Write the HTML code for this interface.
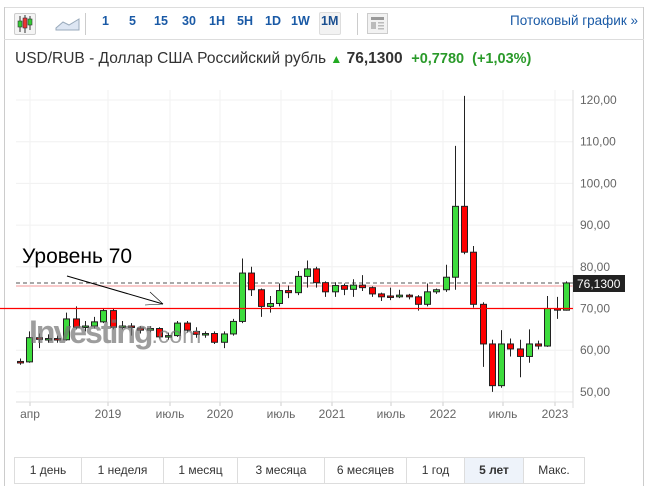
<!DOCTYPE html>
<html><head><meta charset="utf-8"><style>
body{margin:0;width:648px;height:486px;background:#fff;overflow:hidden;font-family:"Liberation Sans",Arial,sans-serif;position:relative}
.a{position:absolute}
.tb{font-size:12.5px;font-weight:bold;color:#1a5aa6;top:14px}
</style></head><body>
<div class="a" style="left:4px;top:7px;width:640px;height:1px;background:#ddd"></div>
<div class="a" style="left:4px;top:7px;width:1px;height:479px;background:#ccc"></div>
<div class="a" style="left:643px;top:7px;width:1px;height:479px;background:#ccc"></div>
<div class="a" style="left:4px;top:39px;width:640px;height:1px;background:#ddd"></div>
<div class="a" style="left:14px;top:13px;width:20px;height:20px;border:1px solid #ccc;border-radius:2px;background:#f4f4f4"></div>
<svg class="a" style="left:14px;top:13px" width="22" height="22"><g stroke="#333" stroke-width="1"><line x1="6" y1="3" x2="6" y2="19"/><line x1="11" y1="2" x2="11" y2="20"/><line x1="16" y1="3" x2="16" y2="17"/></g><rect x="4" y="8" width="4" height="6" fill="#3c3" stroke="#333" stroke-width=".6"/><rect x="9" y="5" width="4" height="10" fill="#e33" stroke="#333" stroke-width=".6"/><rect x="14" y="6" width="4" height="6" fill="#3c3" stroke="#333" stroke-width=".6"/></svg>
<svg class="a" style="left:55px;top:16px" width="26" height="16"><path d="M1 12 L8 6 L14 9 L24 3 L24 14 L1 14Z" fill="#dde6f3" stroke="#9ab" stroke-width="1"/></svg>
<div class="a" style="left:85px;top:13px;width:1px;height:22px;background:#ccc"></div>
<div class="a tb" style="left:102px">1</div>
<div class="a tb" style="left:129px">5</div>
<div class="a tb" style="left:154px">15</div>
<div class="a tb" style="left:182px">30</div>
<div class="a tb" style="left:209px">1H</div>
<div class="a tb" style="left:237px">5H</div>
<div class="a tb" style="left:265px">1D</div>
<div class="a tb" style="left:291px">1W</div>
<div class="a" style="left:319px;top:12px;width:20px;height:21px;border:1px solid #ddd;border-radius:2px;background:#f2f2f2"></div>
<div class="a tb" style="left:321px;color:#1a4f90">1M</div>
<div class="a" style="left:357px;top:13px;width:1px;height:22px;background:#ccc"></div>
<svg class="a" style="left:367px;top:13px" width="22" height="22"><rect x=".5" y=".5" width="20" height="20" fill="#f2f2f2" stroke="#ccc"/><rect x="4" y="4" width="13" height="3" fill="#999"/><g fill="#bbb"><rect x="4" y="9" width="5" height="7"/><rect x="11" y="9" width="6" height="1.5"/><rect x="11" y="12" width="6" height="1.5"/><rect x="11" y="15" width="6" height="1.5"/></g></svg>
<div class="a" style="right:10px;top:13px;font-size:13.5px;color:#1a5aa6">Потоковый график »</div>
<div class="a" style="left:15px;top:50px;font-size:15.5px;color:#333;white-space:nowrap">USD/RUB - Доллар США Российский рубль <span style="color:#2a2;font-size:12px">&#9650;</span> <b>76,1300</b> &nbsp;<b style="color:#2a9a2a;font-size:14.5px">+0,7780 &nbsp;(+1,03%)</b></div>
<svg id="ch" class="a" style="left:0;top:0" width="648" height="440"></svg>
<div class="a" style="left:22px;top:245px;font-size:21px;color:#000">Уровень 70</div>
<div class="a" style="left:29px;top:314px;font-size:32px;font-weight:bold;color:rgba(115,115,115,.7);letter-spacing:-2px">Investing<span style="font-weight:normal;font-size:23px;letter-spacing:0">.com</span></div>
<div class="a" style="left:14px;top:457px;height:25px;display:flex;border:1px solid #ddd;font-size:12px;color:#333">
<div style="width:66px;text-align:center;line-height:25px;border-right:1px solid #ddd">1 день</div>
<div style="width:81px;text-align:center;line-height:25px;border-right:1px solid #ddd">1 неделя</div>
<div style="width:73px;text-align:center;line-height:25px;border-right:1px solid #ddd">1 месяц</div>
<div style="width:86px;text-align:center;line-height:25px;border-right:1px solid #ddd">3 месяца</div>
<div style="width:81px;text-align:center;line-height:25px;border-right:1px solid #ddd">6 месяцев</div>
<div style="width:57px;text-align:center;line-height:25px;border-right:1px solid #ddd">1 год</div>
<div style="width:58px;text-align:center;line-height:25px;border-right:1px solid #ddd;background:#eef3fa;font-weight:bold">5 лет</div>
<div style="width:60px;text-align:center;line-height:25px">Макс.</div>
</div>
<script>
var d=[[57.3,57.2,58,56.5],[57.2,63,64.5,57],[63,62.6,64,60.5],[62.6,62.8,63.8,61.8],[62.8,62.5,63.5,61.8],[62.5,67.5,69,62.3],[67.5,65.5,70.5,65],[65.5,65.8,67,64.5],[65.8,66.8,68,65.2],[66.8,69.5,70,66.5],
[69.5,65.5,70,65],[65.5,65.8,67,65],[65.8,65.5,66.5,63.5],[65.3,64.8,65.8,64],[64.8,65.2,65.8,64.3],[65.2,63.2,65.5,62.8],[63.2,63.5,64.2,62.5],[63.5,66.5,67,63.2],[66.5,64.8,67,64.2],[64.5,63.8,65.5,63],[63.8,64,64.5,63],[64,61.9,64.5,61.5],
[61.9,63.9,64.5,60.5],[63.9,66.9,67.5,63.5],[66.9,78.5,82,66.5],[78.5,74.5,80,73],[74.5,70.5,74.8,68],[70.5,71.2,73,69],[71.2,74.3,76,70.5],[74.3,73.8,75.5,72.5],[73.8,77.7,79,73.2],[77.7,79.5,81.5,75],[79.5,76.2,80,75],[76.2,74,76.5,72.8],
[74,75.5,76.3,72.8],[75.5,74.6,76,73.2],[74.6,75.6,77,72.8],[75.6,75,78,74.2],[75,73.5,75.3,72.8],[73.5,72.8,73.8,71.8],[73,72.8,75,72],[72.8,73.2,74.5,72.5],[73.2,72.8,73.5,72.2],[72.8,71,73.2,69.5],[71,74,76,70.5],[74,74.5,74.8,73.5],
[74.5,77.5,80.5,74],[77.5,94.5,109,74.5],[94.5,83.5,121,83],[83.5,71,85,70.2],[71,61.5,71.5,56],[61.5,51.5,62.5,50],[51.5,61.5,64.8,51],[61.5,60.3,62.8,58.5],[60.3,58.5,62.5,53.5],[58.5,61.5,65,57],[61.5,61,62.3,60.2],[61,70,73,60.8],[70,69.6,72.8,67.5],[69.6,76.13,76.5,69.5]];
function y(p){return 100+(120-p)*4.17}
var s='',i;
for(var p=50;p<=120;p+=10){s+='<line x1="16" x2="573" y1="'+y(p)+'" y2="'+y(p)+'" stroke="#f0f0f0"/>';s+='<text x="580" y="'+(y(p)+4)+'" font-size="12" fill="#666" font-family="Liberation Sans">'+p+',00</text>';}
var lx=[[30,'апр'],[108,'2019'],[170,'июль'],[220,'2020'],[281,'июль'],[332,'2021'],[391,'июль'],[443,'2022'],[503,'июль'],[555,'2023']];
lx.forEach(function(l){s+='<line x1="'+l[0]+'" x2="'+l[0]+'" y1="90" y2="402" stroke="#f2f2f2"/><line x1="'+l[0]+'" x2="'+l[0]+'" y1="402" y2="406" stroke="#ccc"/><text x="'+l[0]+'" y="418" text-anchor="middle" font-size="12" fill="#666" font-family="Liberation Sans">'+l[1]+'</text>';});
s+='<line x1="16" x2="573" y1="402" y2="402" stroke="#ddd"/><line x1="573" x2="573" y1="90" y2="408" stroke="#ddd"/>';
s+='<line x1="16" x2="573" y1="286" y2="286" stroke="#f8caca" stroke-width="2"/>';
s+='<line x1="16" x2="573" y1="283" y2="283" stroke="#555" stroke-dasharray="4,3"/>';
for(i=0;i<d.length;i++){var c=d[i],x=Math.round(20+i*9.25)+.5,o=y(c[0]),cl=y(c[1]),t=Math.min(o,cl),h=Math.max(Math.abs(o-cl),1.5);
s+='<line x1="'+x+'" x2="'+x+'" y1="'+y(c[2])+'" y2="'+y(c[3])+'" stroke="#222"/>';
s+='<rect x="'+(x-3)+'" y="'+t+'" width="6" height="'+h+'" fill="'+(c[1]>=c[0]?'#3ddc3d':'#f00')+'" stroke="#222" stroke-width="1"/>';}
s+='<line x1="0" x2="573" y1="308.5" y2="308.5" stroke="#f00" stroke-width="1.2"/>';
s+='<line x1="67" y1="276" x2="163" y2="304" stroke="#000"/><line x1="150" y1="292" x2="163" y2="304" stroke="#000" stroke-width=".6"/><line x1="145" y1="305" x2="163" y2="304" stroke="#000" stroke-width=".6"/>';
s+='<rect x="573" y="275" width="52" height="17" fill="#222"/><text x="577" y="288" font-size="12" fill="#fff" font-family="Liberation Sans">76,1300</text>';
document.getElementById('ch').innerHTML=s;
</script>
</body></html>
